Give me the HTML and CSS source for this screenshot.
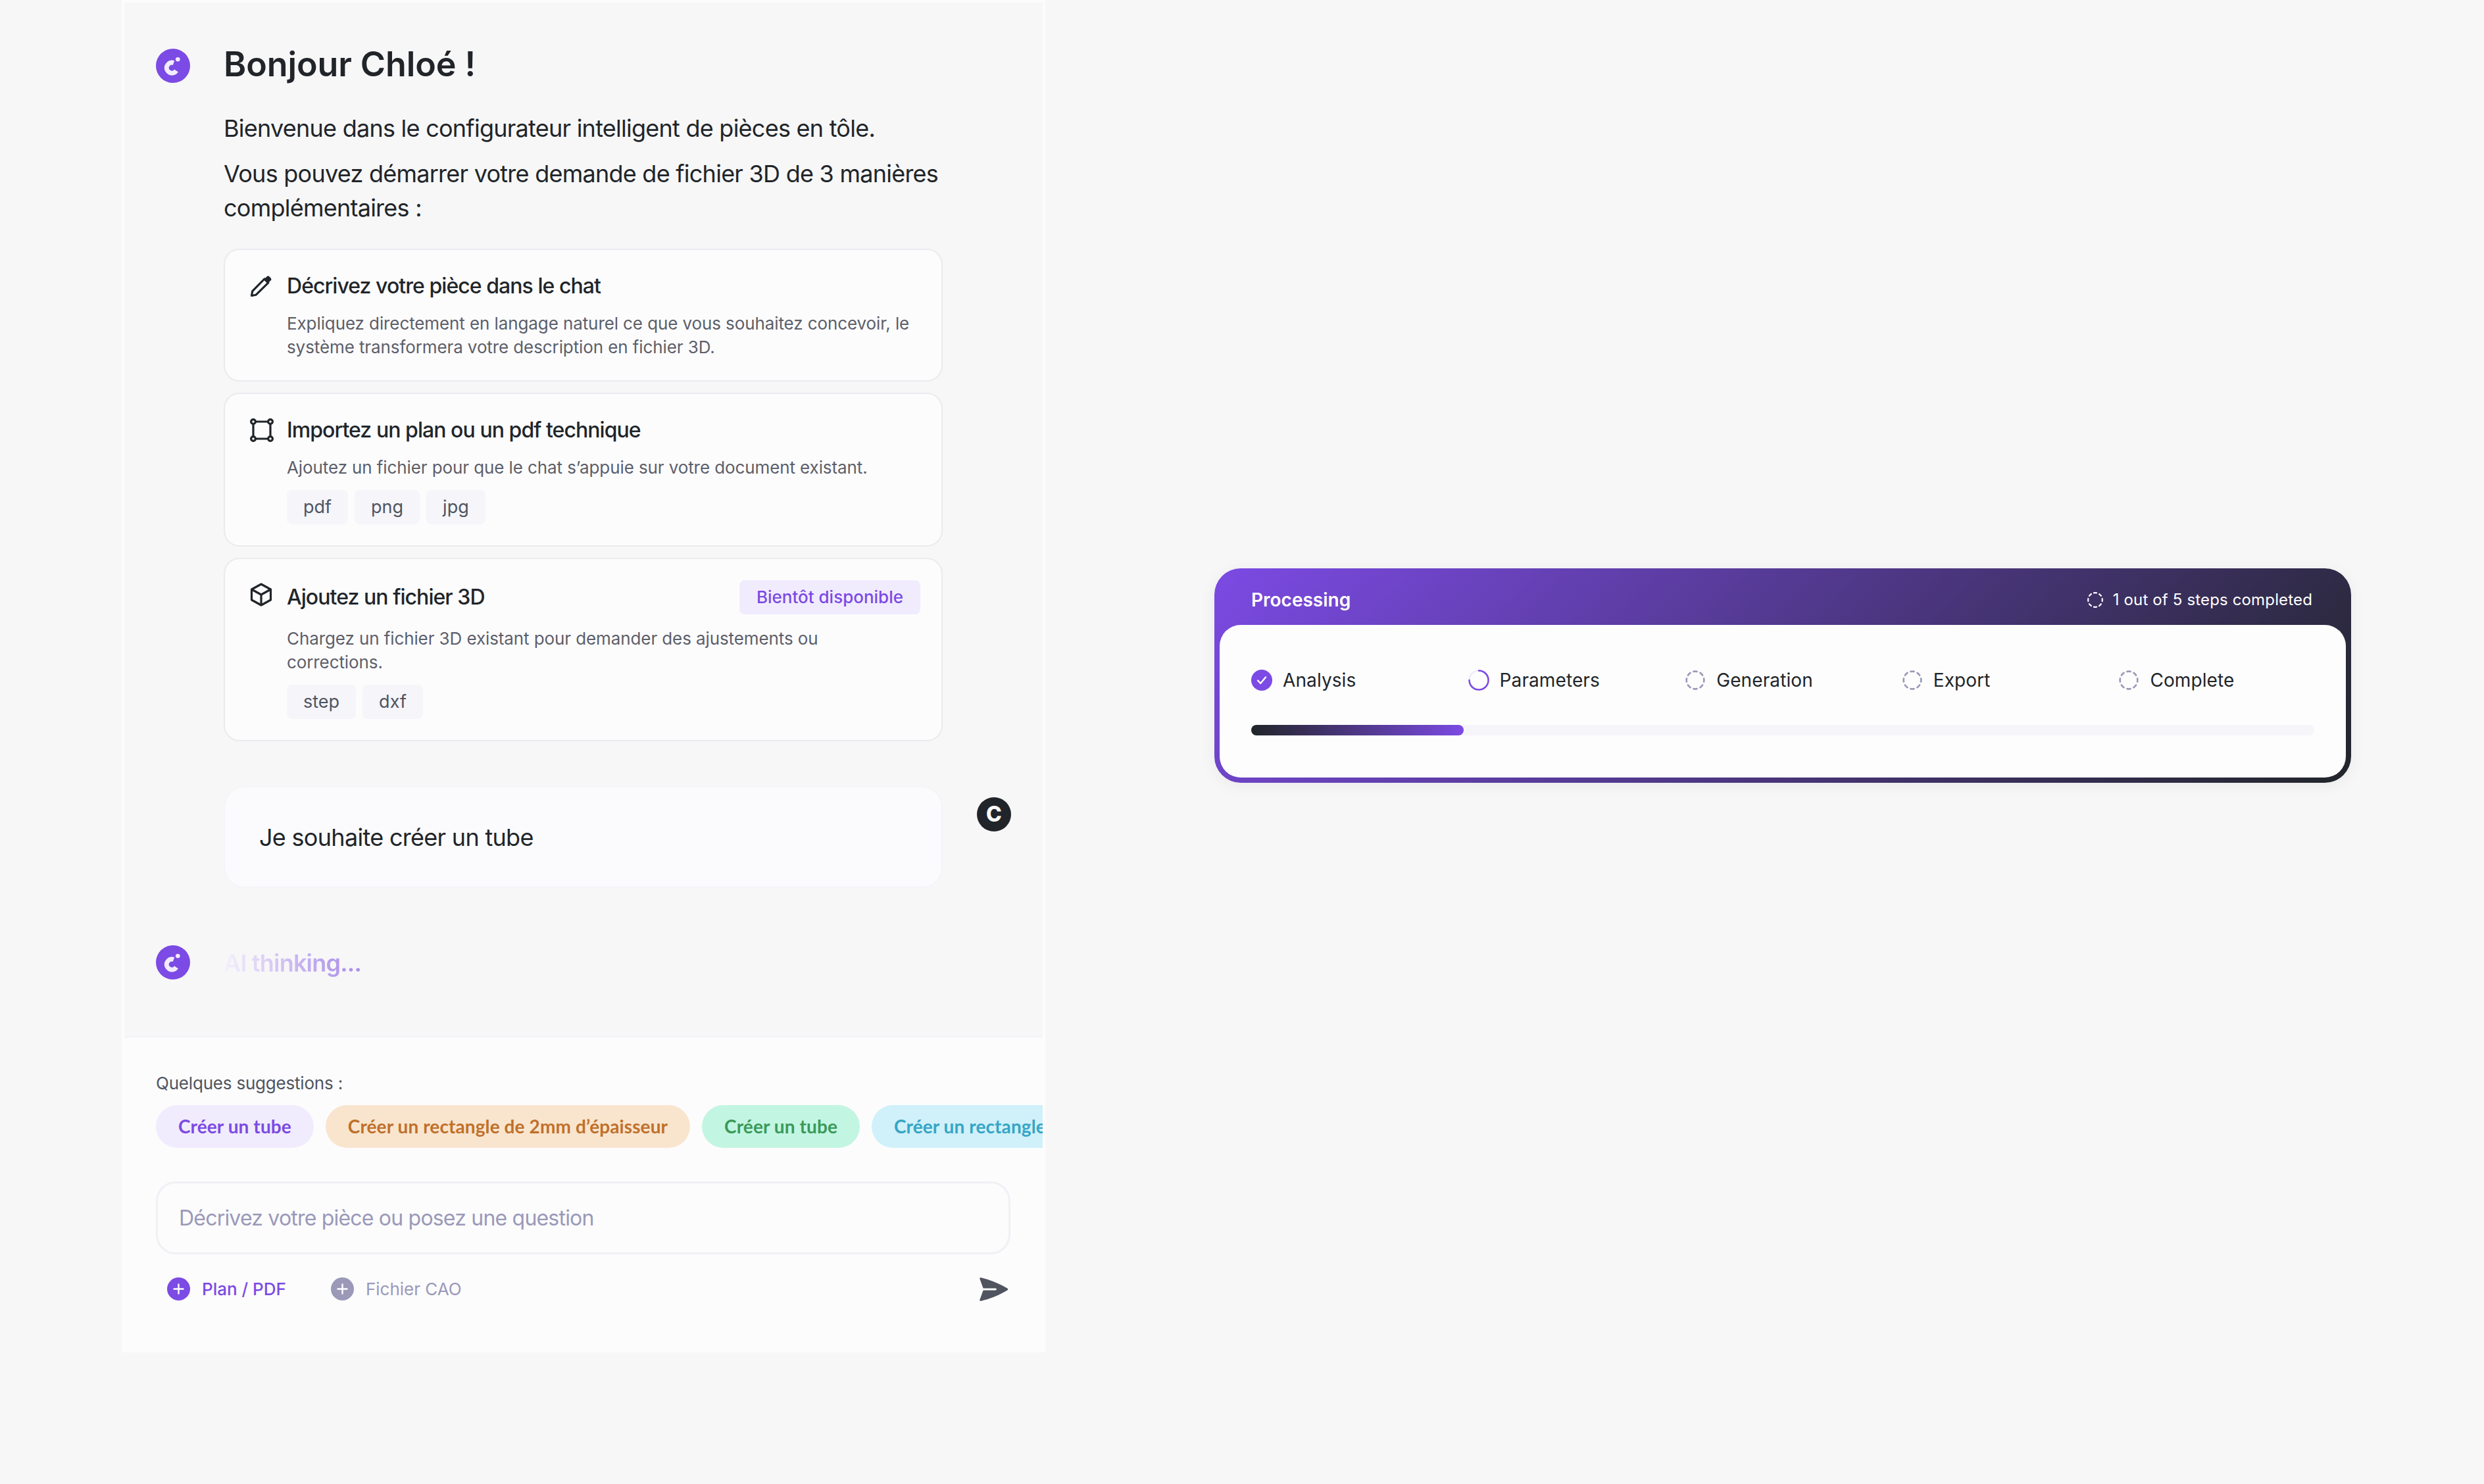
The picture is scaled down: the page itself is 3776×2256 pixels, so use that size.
FILE: index.html
```html
<!doctype html>
<html lang="fr">
  <head>
    <meta charset="UTF-8" />
    <meta name="viewport" content="width=device-width, initial-scale=1.0" />
    <title>Configurateur</title>
    <link rel="stylesheet" href="styles.css">
  </head>
  <body>
    <svg class="sprites" width="0" height="0">
      <symbol id="logo" viewBox="0 0 52 52">
        <path d="M27 21.600A8 8 0 1 0 31 33.500" fill="none" stroke="currentColor" stroke-width="7" />
        <circle cx="33.300" cy="16.300" r="3.300" fill="currentColor" />
      </symbol>
      <symbol id="dashed" viewBox="0 0 24 24">
        <g fill="none" stroke="currentColor" stroke-width="2" stroke-linecap="round" stroke-linejoin="round">
          <path d="M10.1 2.182a10 10 0 0 1 3.8 0" />
          <path d="M13.9 21.818a10 10 0 0 1-3.8 0" />
          <path d="M17.609 3.721a10 10 0 0 1 2.69 2.7" />
          <path d="M2.182 13.9a10 10 0 0 1 0-3.8" />
          <path d="M20.279 17.609a10 10 0 0 1-2.7 2.69" />
          <path d="M21.818 10.1a10 10 0 0 1 0 3.8" />
          <path d="M3.721 6.391a10 10 0 0 1 2.7-2.69" />
          <path d="M6.391 20.279a10 10 0 0 1-2.7-2.69" />
        </g>
      </symbol>
      <symbol id="plus" viewBox="0 0 35 35">
        <circle cx="17.5" cy="17.5" r="17.5" fill="currentColor" />
        <path d="M17.5 10.5v14M10.5 17.5h14" stroke="#fff" stroke-width="2.4" stroke-linecap="round" />
      </symbol>
    </svg>

    <main class="page">
      <section class="chat">
        <div class="messages">
          <div class="message">
            <svg class="avatar avatar-ai"><use href="#logo" /></svg>
            <div class="message-body">
              <h1>Bonjour Chloé !</h1>
              <p class="lead">Bienvenue dans le configurateur intelligent de pièces en tôle.</p>
              <p class="lead">Vous pouvez démarrer votre demande de fichier 3D de 3 manières complémentaires :</p>

              <div class="options">
                <div class="option">
                  <div class="option-head">
                    <svg class="option-icon" viewBox="0 0 34 34">
                      <path d="M2.500 31.500l1.200-6.800L22 6l5.800 5.800L9.200 30.200z" fill="none" stroke="#212529" stroke-width="3.200" stroke-linejoin="round" />
                      <path d="M21 7l4.500-4.500a3 3 0 0 1 4 0l2 2a3 3 0 0 1 0 4L27 13z" fill="#212529" />
                    </svg>
                    <h2>Décrivez votre pièce dans le chat</h2>
                  </div>
                  <p class="option-text">Expliquez directement en langage naturel ce que vous souhaitez concevoir, le système transformera votre description en fichier 3D.</p>
                </div>

                <div class="option">
                  <div class="option-head">
                    <svg class="option-icon option-icon-wide" viewBox="0 0 36 36">
                      <g fill="none" stroke="#212529" stroke-width="3.200">
                        <path d="M8.500 5h19M8.500 31h19M5 8.500v19M31 8.500v19" />
                        <circle cx="5" cy="5" r="3.400" />
                        <circle cx="31" cy="5" r="3.400" />
                        <circle cx="5" cy="31" r="3.400" />
                        <circle cx="31" cy="31" r="3.400" />
                      </g>
                    </svg>
                    <h2>Importez un plan ou un pdf technique</h2>
                  </div>
                  <p class="option-text">Ajoutez un fichier pour que le chat s’appuie sur votre document existant.</p>
                  <div class="tags">
                    <span class="tag">pdf</span>
                    <span class="tag">png</span>
                    <span class="tag">jpg</span>
                  </div>
                </div>

                <div class="option">
                  <div class="option-head option-head-badge">
                    <svg class="option-icon option-icon-cube" viewBox="0 0 34 36">
                      <g fill="none" stroke="#212529" stroke-width="3.200" stroke-linejoin="round">
                        <path d="M17 2l14.500 8v16L17 34 2.500 26V10z" />
                        <path d="M2.500 10L17 18l14.500-8M17 18v16" />
                      </g>
                    </svg>
                    <h2>Ajoutez un fichier 3D</h2>
                    <span class="badge">Bientôt disponible</span>
                  </div>
                  <p class="option-text">Chargez un fichier 3D existant pour demander des ajustements ou corrections.</p>
                  <div class="tags">
                    <span class="tag">step</span>
                    <span class="tag">dxf</span>
                  </div>
                </div>
              </div>
            </div>
          </div>

          <div class="message message-user">
            <div class="bubble">Je souhaite créer un tube</div>
            <div class="avatar avatar-user">C</div>
          </div>

          <div class="message message-thinking">
            <svg class="avatar avatar-ai"><use href="#logo" /></svg>
            <span class="thinking">AI thinking...</span>
          </div>
        </div>

        <div class="composer">
          <div class="suggest-label">Quelques suggestions :</div>
          <div class="chips">
            <span class="chip chip-purple">Créer un tube</span>
            <span class="chip chip-orange">Créer un rectangle de 2mm d’épaisseur</span>
            <span class="chip chip-green">Créer un tube</span>
            <span class="chip chip-blue">Créer un rectangle de 2mm</span>
          </div>
          <div class="input">Décrivez votre pièce ou posez une question</div>
          <div class="actions">
            <span class="action action-on"><svg class="plus"><use href="#plus" /></svg>Plan / PDF</span>
            <span class="action action-off"><svg class="plus"><use href="#plus" /></svg>Fichier CAO</span>
            <svg class="send" viewBox="2.4 2.3 19.700 19.400" preserveAspectRatio="none">
              <path d="M3.478 2.404a.75.75 0 0 0-.926.941l2.432 7.905H13.5a.75.75 0 0 1 0 1.5H4.984l-2.432 7.905a.75.75 0 0 0 .926.94 60.519 60.519 0 0 0 18.445-8.986.75.75 0 0 0 0-1.218A60.517 60.517 0 0 0 3.478 2.404Z" fill="currentColor" />
            </svg>
          </div>
        </div>
      </section>

      <section class="process">
        <div class="process-head">
          <span class="process-title">Processing</span>
          <span class="process-count">
            <svg class="count-icon"><use href="#dashed" /></svg>
            1 out of 5 steps completed
          </span>
        </div>
        <div class="process-body">
          <div class="steps">
            <div class="step">
              <svg class="step-icon" viewBox="0 0 32 32">
                <circle cx="16" cy="16" r="16" fill="#7c4ae4" />
                <path d="M10 16.500l4.300 4.300L22 11.500" fill="none" stroke="#fff" stroke-width="2.400" stroke-linecap="round" stroke-linejoin="round" />
              </svg>
              Analysis
            </div>
            <div class="step">
              <svg class="step-icon" viewBox="0 0 32 32">
                <circle cx="16" cy="16" r="14.500" fill="none" stroke="#efedf8" stroke-width="2.500" />
                <path d="M16 1.500A14.500 14.500 0 1 1 1.500 16" fill="none" stroke="#7c4ae4" stroke-width="2.500" stroke-linecap="round" />
              </svg>
              Parameters
            </div>
            <div class="step">
              <svg class="step-icon step-wait"><use href="#dashed" /></svg>
              Generation
            </div>
            <div class="step">
              <svg class="step-icon step-wait"><use href="#dashed" /></svg>
              Export
            </div>
            <div class="step">
              <svg class="step-icon step-wait"><use href="#dashed" /></svg>
              Complete
            </div>
          </div>
          <div class="track">
            <div class="fill" style="width: 20%"></div>
          </div>
        </div>
      </section>
    </main>
  </body>
</html>
```

FILE: styles.css
```css
* {
  box-sizing: border-box;
}
body {
  margin: 0;
  background: #f7f7f8;
  color: #212529;
  font-family: Inter, "Liberation Sans", sans-serif;
}
h1,
h2,
p {
  margin: 0;
}
.sprites {
  display: block;
  height: 0;
}
.page {
  display: flex;
  align-items: flex-start;
  gap: 257px;
  height: 2256px;
  padding-left: 185px;
  overflow: hidden;
}

/* chat panel */
.chat {
  display: flex;
  flex-direction: column;
  flex: none;
  width: 1404px;
  height: 2056px;
  border: 4px solid #fcfcfd;
  border-bottom: 0;
  background: #fcfcfd;
}
.messages {
  height: 1573px;
  padding: 64px 48px 0;
  border-bottom: 2px solid #f1f1f6;
  background: #f7f7f8;
}
.message {
  display: flex;
  align-items: flex-start;
  gap: 51px;
}
.message-body {
  width: 1093px;
}
.avatar {
  display: block;
  flex: none;
  width: 52px;
  height: 52px;
  border-radius: 50%;
}
.avatar-ai {
  margin-top: 6px;
  background: #7c4ae4;
  color: #f1ecfd;
}
.avatar-user {
  margin-top: 17px;
  background: #212529;
  color: #fff;
  font-size: 32px;
  font-weight: 800;
  line-height: 52px;
  text-align: center;
}
h1 {
  margin-bottom: 41px;
  font-size: 52px;
  font-weight: 600;
  letter-spacing: -0.1px;
  line-height: 60px;
}
.lead {
  margin-bottom: 17px;
  font-size: 36px;
  letter-spacing: -0.75px;
  line-height: 52px;
}
.options {
  display: flex;
  flex-direction: column;
  gap: 17px;
  margin-top: 36px;
}
.option {
  padding: 32px;
  border: 2px solid #ebebef;
  border-radius: 24px;
  background: #fcfcfd;
}
.option-head {
  display: flex;
  align-items: center;
  gap: 22px;
  height: 46px;
  margin-left: 6px;
}
.option-head-badge {
  height: 52px;
}
.option-icon {
  flex: none;
  width: 34px;
  height: 34px;
}
.option-icon-wide {
  width: 36px;
  height: 36px;
  margin-right: -2px;
}
.option-icon-cube {
  height: 36px;
  margin-top: -9px;
}
h2 {
  font-size: 32px;
  font-weight: 500;
  letter-spacing: -0.95px;
  line-height: 46px;
}
.badge {
  margin-left: auto;
  padding: 0 26px;
  border-radius: 8px;
  background: #f1ecfd;
  color: #7c4ae4;
  font-size: 26px;
  font-weight: 500;
  line-height: 52px;
}
.option-text {
  max-width: 955px;
  margin: 16px 0 0 62px;
  color: #5c5f6a;
  font-size: 26px;
  letter-spacing: -0.1px;
  line-height: 36px;
}
.option-head-badge + .option-text {
  margin-top: 19px;
}
.tags {
  display: flex;
  gap: 10px;
  margin: 16px 0 0 62px;
}
.tag {
  padding: 0 25px;
  border-radius: 8px;
  background: #f5f5fa;
  color: #50545f;
  font-size: 27px;
  line-height: 52px;
}

/* user message + thinking */
.message-user {
  justify-content: flex-end;
  gap: 52px;
  margin-top: 68px;
}
.bubble {
  display: flex;
  align-items: center;
  width: 1093px;
  height: 155px;
  padding: 0 52px;
  border: 2px solid #f5f5f9;
  border-radius: 32px;
  background: #fbfbfd;
  font-size: 36px;
  letter-spacing: -0.7px;
}
.message-thinking {
  margin-top: 87px;
}
.message-thinking .avatar-ai {
  margin-top: 0;
}
.thinking {
  padding-top: 2px;
  background: linear-gradient(90deg, #f4f2fb 0%, #c3aef0 60%, #a98ce8 100%);
  -webkit-background-clip: text;
  background-clip: text;
  color: transparent;
  font-size: 36px;
  font-weight: 600;
  letter-spacing: -0.8px;
  line-height: 50px;
}

/* composer */
.composer {
  padding: 53px 0 0 48px;
}
.suggest-label {
  color: #50545f;
  font-size: 26px;
  letter-spacing: -0.2px;
  line-height: 34px;
}
.chips {
  display: flex;
  gap: 18px;
  margin-top: 16px;
  overflow: hidden;
}
.chip {
  flex: none;
  padding: 0 34px;
  border-radius: 33px;
  font-family: Lato, sans-serif;
  font-size: 28px;
  font-weight: 700;
  letter-spacing: 0.1px;
  line-height: 65px;
}
.chip-purple {
  background: #f1ecfd;
  color: #7c4ae4;
}
.chip-orange {
  background: #f9e5ce;
  color: #c0702b;
}
.chip-green {
  background: #c3f5e3;
  color: #3a9a58;
}
.chip-blue {
  background: #d0f0fa;
  color: #35a5c5;
}
.input {
  width: 1299px;
  height: 111px;
  margin-top: 51px;
  padding-left: 32px;
  border: 3px solid #f0f0f5;
  border-radius: 30px;
  color: #9a99b8;
  font-size: 32px;
  letter-spacing: -0.8px;
  line-height: 105px;
}
.actions {
  display: flex;
  align-items: center;
  width: 1299px;
  height: 37px;
  margin-top: 34px;
  padding-left: 17px;
}
.action {
  display: flex;
  align-items: center;
  gap: 18px;
  margin-right: 68px;
  font-size: 26px;
  line-height: 35px;
}
.action-on {
  color: #7c4ae4;
  font-weight: 500;
}
.action-off {
  color: #9a99b8;
}
.plus {
  width: 35px;
  height: 35px;
}
.send {
  width: 43px;
  height: 36px;
  margin-left: auto;
  margin-right: 4px;
  color: #50545f;
}

/* processing card */
.process {
  flex: none;
  width: 1728px;
  height: 326px;
  margin-top: 864px;
  padding: 0 8px 8px;
  border-radius: 40px;
  background: linear-gradient(135deg, #7c4ae4 0%, #212529 100%);
  box-shadow: 0 4px 24px rgba(0, 0, 0, 0.06);
}
.process-head {
  display: flex;
  align-items: center;
  justify-content: space-between;
  height: 86px;
  padding: 9px 51px 0 48px;
  color: #fff;
}
.process-title {
  font-size: 28px;
  font-weight: 600;
}
.process-count {
  display: flex;
  align-items: center;
  gap: 14px;
  font-size: 24px;
  letter-spacing: 0.15px;
}
.count-icon {
  width: 26px;
  height: 26px;
}
.process-body {
  height: 232px;
  padding: 68px 48px 0;
  border-radius: 32px;
  background: #fdfdfd;
}
.steps {
  display: grid;
  grid-template-columns: repeat(5, 1fr);
  gap: 32px;
}
.step {
  display: flex;
  align-items: center;
  gap: 16px;
  font-size: 28px;
  letter-spacing: 0.1px;
  line-height: 32px;
}
.step-icon {
  flex: none;
  width: 32px;
  height: 32px;
}
.step-wait {
  color: #9a99b8;
}
.track {
  height: 16px;
  margin-top: 52px;
  border-radius: 8px;
  background: #f5f5fa;
}
.fill {
  height: 100%;
  border-radius: 8px;
  background: linear-gradient(90deg, #212529 0%, #7c4ae4 100%);
}
```
